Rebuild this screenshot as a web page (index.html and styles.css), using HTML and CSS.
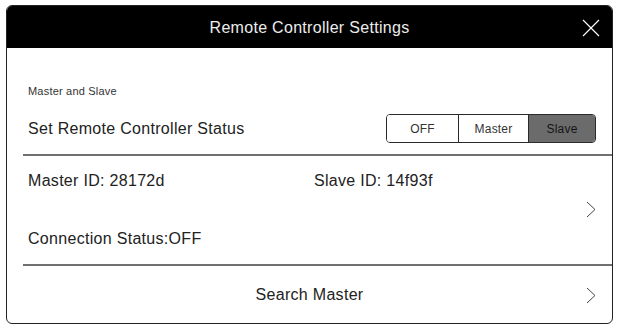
FILE: index.html
```html
<!DOCTYPE html>
<html lang="en">
<head>
<meta charset="utf-8">
<title>Remote Controller Settings</title>
<link rel="stylesheet" href="styles.css">
</head>
<body>
<div class="panel">
  <header class="header">
    <span class="spacer"></span>
    <h1 class="title">Remote Controller Settings</h1>
    <span class="close">
      <svg width="18" height="18" viewBox="0 0 18 18"><path d="M1 1L17 17M17 1L1 17" stroke="#fff" stroke-width="1.1" fill="none"/></svg>
    </span>
  </header>

  <section class="status-section">
    <div class="section-label">Master and Slave</div>
    <div class="status-row">
      <span class="row-text">Set Remote Controller Status</span>
      <div class="segments">
        <span class="seg seg-off">OFF</span>
        <span class="seg seg-master">Master</span>
        <span class="seg seg-slave active">Slave</span>
      </div>
    </div>
  </section>

  <div class="divider"></div>

  <section class="info-section">
    <div class="info-grid">
      <span class="row-text">Master ID: 28172d</span>
      <span class="row-text">Slave ID: 14f93f</span>
      <span class="row-text conn">Connection Status:OFF</span>
    </div>
    <span class="chevron">
      <svg width="10" height="17" viewBox="0 0 10 17"><path d="M1 1L9 8.5L1 16" stroke="#444" stroke-width="1" fill="none"/></svg>
    </span>
  </section>

  <div class="divider"></div>

  <section class="search-section">
    <span class="spacer"></span>
    <span class="row-text">Search Master</span>
    <span class="chevron">
      <svg width="10" height="17" viewBox="0 0 10 17"><path d="M1 1L9 8.5L1 16" stroke="#444" stroke-width="1" fill="none"/></svg>
    </span>
  </section>
</div>
</body>
</html>
```

FILE: styles.css
```css
* { box-sizing: border-box; }

html, body {
  margin: 0;
  padding: 0;
  background: #fff;
}

body {
  font-family: "Liberation Sans", Arial, Helvetica, sans-serif;
  color: #222;
}

.panel {
  margin: 5px 4px 0 6px;
  height: 319px;
  border: 1px solid #222;
  border-radius: 6px;
  overflow: hidden;
  background: #fff;
}

.header {
  height: 42px;
  background: #000;
  display: grid;
  grid-template-columns: 1fr auto 1fr;
  align-items: center;
  padding: 0 12px 0 12px;
}

.title {
  margin: 0;
  font-size: 16px;
  letter-spacing: 0.3px;
  font-weight: normal;
  color: #ececec;
  line-height: 18px;
  padding-top: 2px;
}

.close {
  justify-self: end;
  display: flex;
  margin-top: 1px;
}

.status-section {
  height: 106px;
  padding: 36px 16px 11px 21px;
}

.section-label {
  font-size: 11px;
  letter-spacing: 0.2px;
  line-height: 14px;
  color: #333;
}

.status-row {
  margin-top: 16px;
  height: 29px;
  display: flex;
  align-items: center;
  justify-content: space-between;
}

.row-text {
  font-size: 16px;
  letter-spacing: 0.3px;
  line-height: 18px;
  color: #222;
}

.segments {
  display: flex;
  height: 29px;
  border: 1px solid #2a2a2a;
  border-radius: 4px;
  overflow: hidden;
}

.seg {
  display: flex;
  align-items: center;
  justify-content: center;
  font-size: 12px;
  letter-spacing: 0.2px;
  color: #333;
  background: #fff;
}

.seg + .seg {
  border-left: 1px solid #2a2a2a;
}

.seg-off { width: 71px; }
.seg-master { width: 70px; }
.seg-slave { width: 67px; }

.seg.active {
  background: #6b6b6b;
  color: #151515;
}

.divider {
  height: 2px;
  margin-left: 16px;
  background: #707070;
}

.info-section {
  height: 108px;
  padding: 16px 16px 16px 21px;
  display: flex;
  align-items: center;
  justify-content: space-between;
}

.info-grid {
  align-self: stretch;
  display: grid;
  grid-template-columns: 286px auto;
  grid-template-rows: 18px 18px;
  row-gap: 40px;
}

.info-grid .conn {
  grid-column: 1 / 3;
}

.chevron {
  display: flex;
  margin-top: -2px;
}

.search-section {
  height: 57px;
  padding: 0 16px;
  display: grid;
  grid-template-columns: 1fr auto 1fr;
  align-items: center;
}

.search-section .chevron {
  justify-self: end;
  margin-top: 1px;
}
```
